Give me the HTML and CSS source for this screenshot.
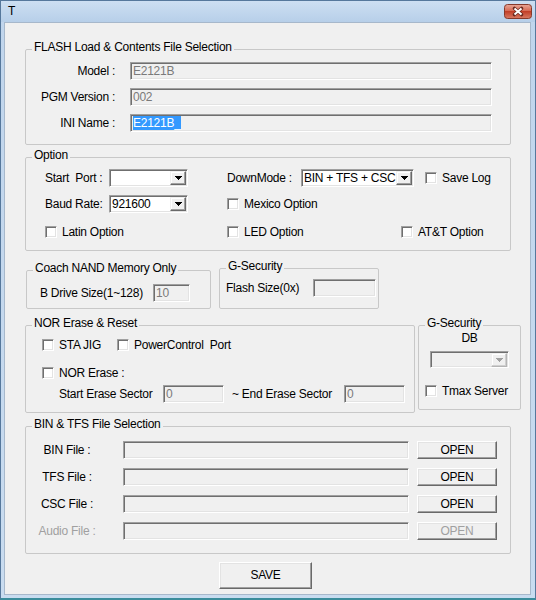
FILE: index.html
```html
<!DOCTYPE html>
<html>
<head>
<meta charset="utf-8">
<link rel="stylesheet" href="styles.css">
</head>
<body>
<div class="window">
  <div class="titlebar">
    <span class="title">T</span>
    <span class="close">
      <svg width="28" height="15" viewBox="0 0 28 15">
        <defs>
          <linearGradient id="cg" x1="0" y1="0" x2="0" y2="1">
            <stop offset="0" stop-color="#e9a898"/>
            <stop offset="0.45" stop-color="#d66a54"/>
            <stop offset="0.5" stop-color="#c23f28"/>
            <stop offset="1" stop-color="#d87a63"/>
          </linearGradient>
        </defs>
        <rect x="0.5" y="0.5" width="27" height="14" rx="3" fill="url(#cg)" stroke="#86392b"/>
        <path d="M10.5 4.5l7 6M17.5 4.5l-7 6" stroke="#6b2a20" stroke-width="3.6" stroke-linecap="round"/>
        <path d="M10.5 4.5l7 6M17.5 4.5l-7 6" stroke="#ffffff" stroke-width="2"/>
      </svg>
    </span>
  </div>
  <div class="client">
    <fieldset class="grp g-flash">
      <legend>FLASH Load &amp; Contents File Selection</legend>
      <div class="flash-body">
        <span class="lbl-r">Model :</span>
        <div class="edit">E2121B</div>
        <span class="lbl-r">PGM Version :</span>
        <div class="edit">002</div>
        <span class="lbl-r">INI Name :</span>
        <div class="edit"><span class="sel">E2121B_</span></div>
      </div>
    </fieldset>

    <fieldset class="grp g-option">
      <legend>Option</legend>
      <div class="opt-body">
        <div class="orow r1">
          <div class="cell1">
            <span class="lbl-sp">Start&nbsp; Port :</span>
            <div class="combo w79"><span class="ctext"></span><span class="arrow"><svg width="7" height="4" viewBox="0 0 7 4"><path d="M0 0h7v1h-1v1h-1v1h-1v1h-1v-1h-1v-1h-1v-1h-1z"/></svg></span></div>
          </div>
          <div class="cell-dm">
            <span class="lbl-dm">DownMode :</span>
            <div class="combo w113"><span class="ctext">BIN + TFS + CSC</span><span class="arrow"><svg width="7" height="4" viewBox="0 0 7 4"><path d="M0 0h7v1h-1v1h-1v1h-1v1h-1v-1h-1v-1h-1v-1h-1z"/></svg></span></div>
          </div>
          <label class="chk savelog"><span class="box"></span>Save Log</label>
        </div>
        <div class="orow r2">
          <div class="cell1">
            <span class="lbl-sp">Baud Rate:</span>
            <div class="combo w79"><span class="ctext">921600</span><span class="arrow"><svg width="7" height="4" viewBox="0 0 7 4"><path d="M0 0h7v1h-1v1h-1v1h-1v1h-1v-1h-1v-1h-1v-1h-1z"/></svg></span></div>
          </div>
          <label class="chk"><span class="box"></span>Mexico Option</label>
        </div>
        <div class="orow r3">
          <div class="cell1">
            <label class="chk"><span class="box"></span>Latin Option</label>
          </div>
          <div class="cell-led">
            <label class="chk"><span class="box"></span>LED Option</label>
          </div>
          <label class="chk"><span class="box"></span>AT&amp;T Option</label>
        </div>
      </div>
    </fieldset>

    <div class="pair pair1">
      <fieldset class="grp g-coach">
        <legend>Coach NAND Memory Only</legend>
        <div class="inline-body coach-body">
          <span class="lbl-bd">B Drive Size(1~128)</span>
          <div class="edit w37">10</div>
        </div>
      </fieldset>
      <fieldset class="grp g-gsec">
        <legend>G-Security</legend>
        <div class="inline-body gsec-body">
          <span class="lbl-fs">Flash Size(0x)</span>
          <div class="edit w63"></div>
        </div>
      </fieldset>
    </div>

    <div class="pair pair2">
      <fieldset class="grp g-nor">
        <legend>NOR Erase &amp; Reset</legend>
        <div class="nor-body">
          <div class="crow">
            <label class="chk sta"><span class="box"></span>STA JIG</label>
            <label class="chk"><span class="box"></span>PowerControl&nbsp; Port</label>
          </div>
          <div class="crow rb">
            <label class="chk"><span class="box"></span>NOR Erase :</label>
          </div>
          <div class="sector-row">
            <span class="lbl-ss">Start Erase Sector</span>
            <div class="edit w61">0</div>
            <span class="lbl-es">~ End Erase Sector</span>
            <div class="edit w61">0</div>
          </div>
        </div>
      </fieldset>
      <fieldset class="grp g-db">
        <legend>G-Security</legend>
        <div class="db-body">
          <div class="db-cap">DB</div>
          <div class="combo disabled db-combo"><span class="ctext"></span><span class="arrow"><svg width="7" height="4" viewBox="0 0 7 4"><path d="M0 0h7v1h-1v1h-1v1h-1v1h-1v-1h-1v-1h-1v-1h-1z"/></svg></span></div>
          <label class="chk tmax"><span class="box"></span>Tmax Server</label>
        </div>
      </fieldset>
    </div>

    <fieldset class="grp g-bin">
      <legend>BIN &amp; TFS File Selection</legend>
      <div class="bin-body">
        <span class="lbl-c">BIN File :</span>
        <div class="edit"></div>
        <button class="btn">OPEN</button>
        <span class="lbl-c">TFS File :</span>
        <div class="edit"></div>
        <button class="btn">OPEN</button>
        <span class="lbl-c">CSC File :</span>
        <div class="edit"></div>
        <button class="btn">OPEN</button>
        <span class="lbl-c dis">Audio File :</span>
        <div class="edit"></div>
        <button class="btn dis">OPEN</button>
      </div>
    </fieldset>

    <div class="save-row">
      <button class="btn save">SAVE</button>
    </div>
  </div>
</div>
</body>
</html>
```

FILE: styles.css
```css
* { box-sizing: border-box; }

body {
  margin: 0;
  font-family: "Liberation Sans", Arial, sans-serif;
  font-size: 12px;
  letter-spacing: -0.25px;
  color: #000;
  background: #ffffff;
}

.window {
  width: 536px;
  height: 600px;
  background: linear-gradient(#c0d5ec, #c9dcf0);
  border: 1px solid #56789c;
  border-bottom: 2px solid #3b8d9c;
  padding-bottom: 3px;
  display: flex;
  flex-direction: column;
  overflow: hidden;
}

.titlebar {
  flex: none;
  height: 21px;
  display: flex;
  justify-content: space-between;
  align-items: flex-start;
  padding: 0 3px 0 7px;
  background: linear-gradient(#cddff2, #b7cfe9);
}

.title {
  line-height: 21px;
  font-size: 12px;
}

.close {
  display: block;
  margin-top: 3px;
  height: 15px;
}
.close svg { display: block; }

.client {
  flex: none;
  height: 573px;
  margin: 0 4px 0 3px;
  background: #f0f0f0;
  border: 1px solid #a7b8cb;
  padding: 17px 0 0 20px;
}

/* group boxes */
.grp {
  margin: 0;
  padding: 0;
  border: 1px solid #c8c8c8;
  border-radius: 2px;
  min-width: 0;
}
.grp legend {
  padding: 0 2px 4px;
  margin-left: 6px;
  line-height: 14px;
}

/* sunken edit */
.edit {
  height: 18px;
  background: #f0f0f0;
  border: 1px solid;
  border-color: #a0a0a0 #ffffff #ffffff #a0a0a0;
  box-shadow: inset 1px 1px #6f6f6f, inset -1px -1px #e3e3e3;
  color: #7a7a7a;
  padding: 0 2px;
  line-height: 16px;
  white-space: nowrap;
  overflow: hidden;
}
.sel {
  background: #3399ff;
  color: #ffffff;
}

/* combo box */
.combo {
  height: 18px;
  background: #ffffff;
  border: 1px solid;
  border-color: #a0a0a0 #ffffff #ffffff #a0a0a0;
  box-shadow: inset 1px 1px #6f6f6f, inset -1px -1px #e3e3e3;
  display: flex;
  align-items: center;
  padding: 0 1px 0 2px;
  flex: none;
}
.ctext {
  flex: 1;
  white-space: nowrap;
  overflow: hidden;
  line-height: 16px;
}
.arrow {
  width: 16px;
  height: 14px;
  background: #f0f0f0;
  border: 1px solid;
  border-color: #f0f0f0 #696969 #696969 #f0f0f0;
  box-shadow: inset -1px -1px #a0a0a0, inset 1px 1px #ffffff;
  display: flex;
  align-items: center;
  justify-content: center;
  flex: none;
}
.arrow svg { display: block; fill: #000; }
.combo.disabled { background: #f0f0f0; }
.combo.disabled .arrow svg { fill: #a0a0a0; }
.combo.disabled .arrow {
  border-color: #f0f0f0 #b5b5b5 #b5b5b5 #f0f0f0;
  box-shadow: inset -1px -1px #d0d0d0, inset 1px 1px #ffffff;
}

.w79 { width: 79px; }
.w113 { width: 113px; }
.w37 { width: 37px; flex: none; }
.w61 { width: 61px; flex: none; }
.w63 { width: 63px; flex: none; }

/* checkbox */
.chk {
  display: flex;
  align-items: center;
  gap: 5px;
  white-space: nowrap;
  height: 13px;
  line-height: 14px;
}
.box {
  width: 12px;
  height: 12px;
  flex: none;
  background: #ffffff;
  border: 1px solid;
  border-color: #a0a0a0 #ffffff #ffffff #a0a0a0;
  box-shadow: inset 1px 1px #6f6f6f, inset -1px -1px #e3e3e3;
}

/* raised button */
.btn {
  font: inherit;
  letter-spacing: inherit;
  color: #000;
  background: #f0f0f0;
  border: 1px solid;
  border-color: #ffffff #696969 #696969 #ffffff;
  box-shadow: inset -1px -1px #a0a0a0, inset 1px 1px #e3e3e3;
  padding: 0;
  height: 18px;
  line-height: 16px;
}
.btn.dis { color: #a0a0a0; }

/* FLASH group */
.g-flash { width: 486px; }
.flash-body {
  display: grid;
  grid-template-columns: 89px 362px;
  column-gap: 15px;
  row-gap: 8px;
  align-items: center;
  padding: 4px 0 12px 0;
}
.lbl-r { text-align: right; white-space: nowrap; }

/* Option group */
.g-option { width: 486px; margin-top: 3px; }
.opt-body { padding: 3px 0 9px 19px; }
.orow {
  display: flex;
  align-items: center;
  height: 18px;
}
.orow.r2 { margin-top: 8px; }
.orow.r3 { margin-top: 10px; }
.cell1 {
  width: 182px;
  flex: none;
  display: flex;
  align-items: center;
}
.lbl-sp { width: 64px; flex: none; white-space: nowrap; }
.cell-dm { display: flex; align-items: center; flex: none; }
.lbl-dm { width: 74px; flex: none; white-space: nowrap; }
.savelog { margin-left: 11px; }
.cell-led { width: 174px; flex: none; }

/* Coach & G-Security row */
.pair { display: flex; align-items: flex-start; }
.pair1 { margin-top: 8px; }
.inline-body { display: flex; align-items: center; }
.g-coach { width: 185px; margin-top: 2px; margin-left: 1px; }
.coach-body { padding: 5px 0 6px 13px; }
.lbl-bd { width: 113px; flex: none; white-space: nowrap; }
.g-gsec { width: 160px; margin-left: 8px; }
.gsec-body { padding: 2px 0 11px 6px; }
.lbl-fs { width: 87px; flex: none; white-space: nowrap; }

/* NOR row */
.pair2 { margin-top: 7px; }
.g-nor { width: 390px; }
.nor-body { padding: 4px 0 9px 16px; }
.crow { display: flex; align-items: center; height: 13px; }
.crow.rb { margin-top: 15px; }
.sta { width: 75px; flex: none; }
.sector-row {
  display: flex;
  align-items: center;
  margin: 6px 0 0 17px;
  height: 18px;
}
.lbl-ss { width: 104px; flex: none; white-space: nowrap; }
.lbl-es { width: 112px; flex: none; margin-left: 8px; white-space: nowrap; }

.g-db { width: 103px; margin-left: 3px; }
.db-body { padding: 0 0 12px 6px; }
.db-cap {
  text-align: center;
  line-height: 14px;
  margin: -3px 0 0 -6px;
}
.db-combo { width: 79px; height: 17px; margin: 6px 0 0 5px; }
.tmax { margin-top: 16px; }

/* BIN group */
.g-bin { width: 486px; margin-top: 4px; }
.bin-body {
  display: grid;
  grid-template-columns: 89px 286px 80px;
  column-gap: 8px;
  row-gap: 9px;
  align-items: center;
  padding: 6px 0 13px 0;
}
.lbl-c { text-align: center; padding-right: 7px; white-space: nowrap; }
.lbl-c.dis { color: #a0a0a0; }

.save-row { margin-top: 8px; padding-left: 194px; }
.btn.save { width: 93px; height: 27px; line-height: 25px; }
```
